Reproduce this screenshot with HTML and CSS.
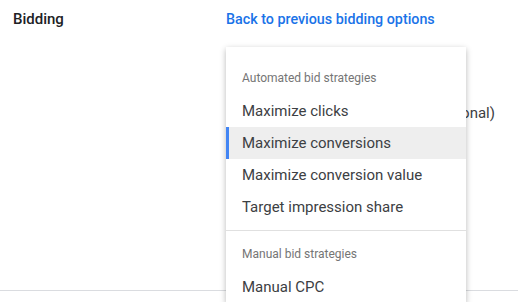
FILE: index.html
```html
<html>
    <head>
        <title>Bidding</title>
        <link rel="stylesheet" href="styles.css">
    </head>
    <body>
        <div class="Seccion">
            <!-- Cabecera -->
            <div class="Cabecera">
                <div class="Titulo">Bidding</div>
                <a class="Enlace" href="#">Back to previous bidding options</a>
            </div>

            <!-- Campo detras del menu -->
            <div class="Campo">Maximum CPC bid limit (optional)</div>
        </div>

        <!-- Menu desplegable -->
        <div class="Menu">
            <div class="Grupo Primero">
                <div class="Encabezado">Automated bid strategies</div>
                <div class="Opcion">Maximize clicks</div>
                <div class="Opcion Activa">Maximize conversions</div>
                <div class="Opcion">Maximize conversion value</div>
                <div class="Opcion">Target impression share</div>
            </div>
            <div class="Grupo">
                <div class="Encabezado">Manual bid strategies</div>
                <div class="Opcion">Manual CPC</div>
            </div>
        </div>
    </body>
</html>
```
FILE: styles.css
```css
body{
    margin: 0;
    font-family: Roboto, "Liberation Sans", sans-serif;
    background-color: white;
    overflow: hidden;
}

.Seccion{
    height: 290px;
    border-bottom: 1px solid #dadce0;
}

.Cabecera{
    display: flex;
    padding-top: 9px;
    line-height: 20px;
    font-size: 14px;
}

.Titulo{
    width: 213px;
    padding-left: 13px;
    font-size: 15px;
    color: #202124;
    font-weight: 500;
}

.Enlace{
    color: #1a73e8;
    font-size: 14.3px;
    font-weight: 500;
    text-decoration: none;
}

.Campo{
    margin-top: 74px;
    width: 495px;
    text-align: right;
    font-size: 15px;
    line-height: 20px;
    color: #3c4043;
    white-space: nowrap;
}

.Menu{
    position: absolute;
    left: 226px;
    top: 47px;
    width: 240px;
    padding-top: 16px;
    background-color: white;
    box-shadow: 0 2px 6px rgba(0, 0, 0, 0.28);
}

.Grupo{
    padding-top: 8px;
}

.Primero{
    padding-top: 0;
    padding-bottom: 7px;
    border-bottom: 1px solid #e0e0e0;
}

.Encabezado{
    height: 32px;
    line-height: 30px;
    padding-left: 16px;
    font-size: 12px;
    color: #757575;
}

.Opcion{
    height: 32px;
    line-height: 32px;
    padding-left: 16px;
    font-size: 15px;
    color: #3c4043;
}

.Activa{
    background-color: #eeeeee;
    box-shadow: inset 3px 0 0 #4285f4;
}
```
